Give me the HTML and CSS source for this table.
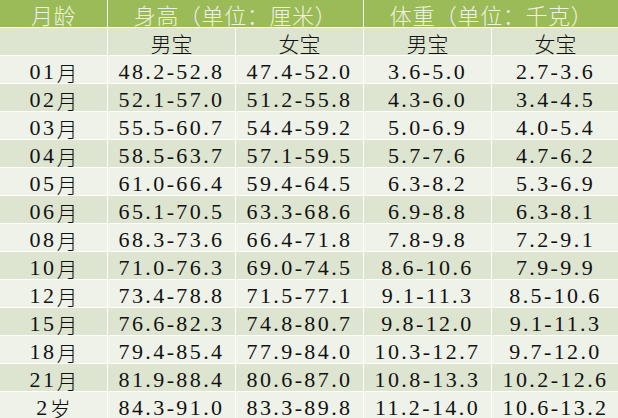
FILE: index.html
```html
<!DOCTYPE html>
<html lang="zh">
<head>
<meta charset="utf-8">
<link rel="stylesheet" href="styles.css">
</head>
<body>
<div class="table">
  <div class="cell head">月龄</div>
  <div class="cell head span2">身高（单位：厘米）</div>
  <div class="cell head span2">体重（单位：千克）</div>

  <div class="cell dark"></div>
  <div class="cell dark cjk">男宝</div>
  <div class="cell dark cjk">女宝</div>
  <div class="cell dark cjk">男宝</div>
  <div class="cell dark cjk">女宝</div>

  <div class="cell light">01<span class="cjk">月</span></div>
  <div class="cell light">48.2-52.8</div>
  <div class="cell light">47.4-52.0</div>
  <div class="cell light">3.6-5.0</div>
  <div class="cell light">2.7-3.6</div>

  <div class="cell dark">02<span class="cjk">月</span></div>
  <div class="cell dark">52.1-57.0</div>
  <div class="cell dark">51.2-55.8</div>
  <div class="cell dark">4.3-6.0</div>
  <div class="cell dark">3.4-4.5</div>

  <div class="cell light">03<span class="cjk">月</span></div>
  <div class="cell light">55.5-60.7</div>
  <div class="cell light">54.4-59.2</div>
  <div class="cell light">5.0-6.9</div>
  <div class="cell light">4.0-5.4</div>

  <div class="cell dark">04<span class="cjk">月</span></div>
  <div class="cell dark">58.5-63.7</div>
  <div class="cell dark">57.1-59.5</div>
  <div class="cell dark">5.7-7.6</div>
  <div class="cell dark">4.7-6.2</div>

  <div class="cell light">05<span class="cjk">月</span></div>
  <div class="cell light">61.0-66.4</div>
  <div class="cell light">59.4-64.5</div>
  <div class="cell light">6.3-8.2</div>
  <div class="cell light">5.3-6.9</div>

  <div class="cell dark">06<span class="cjk">月</span></div>
  <div class="cell dark">65.1-70.5</div>
  <div class="cell dark">63.3-68.6</div>
  <div class="cell dark">6.9-8.8</div>
  <div class="cell dark">6.3-8.1</div>

  <div class="cell light">08<span class="cjk">月</span></div>
  <div class="cell light">68.3-73.6</div>
  <div class="cell light">66.4-71.8</div>
  <div class="cell light">7.8-9.8</div>
  <div class="cell light">7.2-9.1</div>

  <div class="cell dark">10<span class="cjk">月</span></div>
  <div class="cell dark">71.0-76.3</div>
  <div class="cell dark">69.0-74.5</div>
  <div class="cell dark">8.6-10.6</div>
  <div class="cell dark">7.9-9.9</div>

  <div class="cell light">12<span class="cjk">月</span></div>
  <div class="cell light">73.4-78.8</div>
  <div class="cell light">71.5-77.1</div>
  <div class="cell light">9.1-11.3</div>
  <div class="cell light">8.5-10.6</div>

  <div class="cell dark">15<span class="cjk">月</span></div>
  <div class="cell dark">76.6-82.3</div>
  <div class="cell dark">74.8-80.7</div>
  <div class="cell dark">9.8-12.0</div>
  <div class="cell dark">9.1-11.3</div>

  <div class="cell light">18<span class="cjk">月</span></div>
  <div class="cell light">79.4-85.4</div>
  <div class="cell light">77.9-84.0</div>
  <div class="cell light">10.3-12.7</div>
  <div class="cell light">9.7-12.0</div>

  <div class="cell dark">21<span class="cjk">月</span></div>
  <div class="cell dark">81.9-88.4</div>
  <div class="cell dark">80.6-87.0</div>
  <div class="cell dark">10.8-13.3</div>
  <div class="cell dark">10.2-12.6</div>

  <div class="cell light">2<span class="cjk">岁</span></div>
  <div class="cell light">84.3-91.0</div>
  <div class="cell light">83.3-89.8</div>
  <div class="cell light">11.2-14.0</div>
  <div class="cell light">10.6-13.2</div>
</div>
</body>
</html>
```

FILE: styles.css
```css
html, body {
  margin: 0;
  padding: 0;
  background: #ffffff;
  overflow: hidden;
}

.table {
  display: grid;
  grid-template-columns: 107px 127px 127px 127px 127px;
  grid-auto-rows: 27px;
  gap: 1px;
  background: #ffffff;
  width: 619px;
}

.cell {
  display: flex;
  align-items: center;
  justify-content: center;
  font-family: "Liberation Serif", "Noto Sans CJK SC", serif;
  font-size: 22px;
  line-height: 22px;
  letter-spacing: 2.4px;
  color: #111111;
  white-space: nowrap;
  padding-top: 4px;
  box-sizing: border-box;
}

.cjk {
  font-family: "Noto Sans CJK SC", sans-serif;
  font-weight: 300;
  font-size: 21px;
  letter-spacing: 0;
}

.cell.cjk {
  padding-top: 2px;
}

.head {
  background: #9bbb59;
  color: #eef3df;
  font-family: "Noto Sans CJK SC", sans-serif;
  font-weight: 300;
  font-size: 22px;
  line-height: 26px;
  letter-spacing: 0.6px;
  padding-top: 1px;
}

.span2 {
  grid-column: span 2;
}

.dark {
  background: #dde5d1;
}

.light {
  background: #eef2e8;
}
```
